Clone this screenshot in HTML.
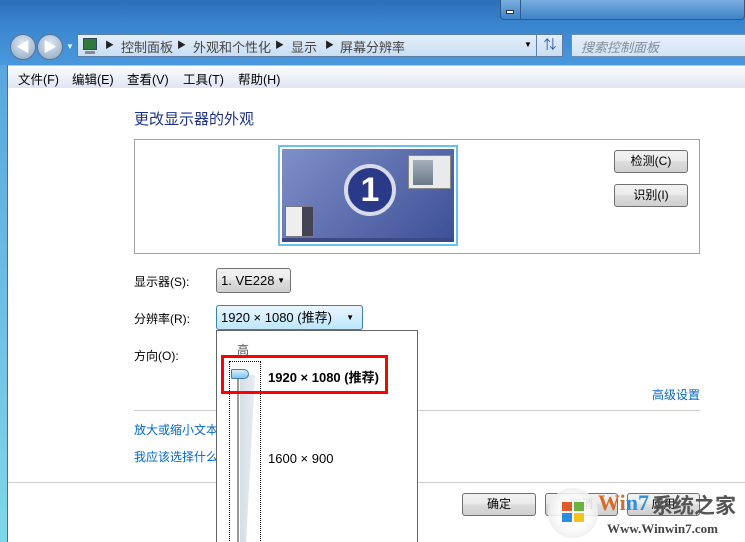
<!DOCTYPE html>
<html><head><meta charset="utf-8"><style>
*{margin:0;padding:0;box-sizing:border-box}
html,body{width:745px;height:542px;overflow:hidden}
body{position:relative;font-family:"Liberation Sans","Noto Sans CJK SC",sans-serif;font-size:12px;color:#000;background:#fff}
.a{position:absolute;white-space:nowrap}
.btn{position:absolute;border:1px solid #707070;border-radius:3px;background:linear-gradient(#f2f2f2 0%,#ebebeb 45%,#dddddd 50%,#cfcfcf 100%);text-align:center;line-height:21px;font-size:12px}
.lnk{color:#0066cc}
</style></head><body>
<div class="a" style="left:0;top:0;width:745px;height:65px;background:linear-gradient(180deg,#2d6fb8 0%,#3a86d0 40%,#4a98dc 100%)"></div>
<div class="a" style="left:0;top:65px;width:8px;height:477px;background:linear-gradient(180deg,#5aa6e0,#7fd8e8)"></div>
<div class="a" style="left:7px;top:65px;width:1px;height:477px;background:#4a6f8a"></div>
<!-- min btn -->
<div class="a" style="left:500px;top:0;width:245px;height:20px;border:1px solid #2c5a8c;border-top:none;border-radius:0 0 4px 4px;background:linear-gradient(#7aaede,#3e82c8)"></div>
<div class="a" style="left:520px;top:0;width:1px;height:20px;background:#2c5a8c"></div>
<div class="a" style="left:506px;top:10px;width:8px;height:4px;background:#fff;border:1px solid #333"></div>
<!-- nav buttons -->
<div class="a" style="left:10px;top:34px;width:26px;height:26px;border-radius:50%;background:radial-gradient(circle at 50% 35%,#dce8f4,#8ea6c0);border:1px solid #5a7390;color:#fff;text-align:center;line-height:24px;font-size:14px">◀</div>
<div class="a" style="left:37px;top:34px;width:26px;height:26px;border-radius:50%;background:radial-gradient(circle at 50% 35%,#dce8f4,#8ea6c0);border:1px solid #5a7390;color:#fff;text-align:center;line-height:24px;font-size:14px">▶</div>
<div class="a" style="left:66px;top:42px;font-size:8px;color:#cfe">▼</div>
<!-- address bar -->
<div class="a" style="left:77px;top:34px;width:486px;height:23px;border:1px solid #5e7fa8;background:linear-gradient(#e3eef9,#c9def3)"></div>
<div class="a" style="left:536px;top:34px;width:27px;height:23px;border-left:1px solid #5e7fa8;color:#235aa0;text-align:center;line-height:22px;font-size:13px">⇅</div>
<div class="a" style="left:83px;top:38px;width:14px;height:12px;background:#2f7a3a;border:1px solid #345"></div>
<div class="a" style="left:85px;top:51px;width:10px;height:3px;background:#889"></div>
<div class="a" style="left:105px;top:38px;font-size:9px;color:#222">▶</div>
<div class="a" style="left:121px;top:37px;font-size:13px;color:#444">控制面板</div>
<div class="a" style="left:177px;top:38px;font-size:9px;color:#222">▶</div>
<div class="a" style="left:193px;top:37px;font-size:13px;color:#444">外观和个性化</div>
<div class="a" style="left:275px;top:38px;font-size:9px;color:#222">▶</div>
<div class="a" style="left:291px;top:37px;font-size:13px;color:#444">显示</div>
<div class="a" style="left:325px;top:38px;font-size:9px;color:#222">▶</div>
<div class="a" style="left:340px;top:37px;font-size:13px;color:#444">屏幕分辨率</div>
<div class="a" style="left:524px;top:40px;font-size:8px;color:#000">▼</div>
<div class="a" style="left:571px;top:34px;width:180px;height:23px;border:1px solid #6c8fb8;background:linear-gradient(#e8f0f9,#d3e3f4)"></div>
<div class="a" style="left:581px;top:37px;color:#7f8c99;font-style:italic;font-size:13px">搜索控制面板</div>
<!-- menu -->
<div class="a" style="left:8px;top:65px;width:737px;height:23px;background:linear-gradient(#fbfcfe,#dfe6f2);border-top:1px solid #b8c8dc"></div>
<div class="a" style="left:18px;top:69px;font-size:12.5px">文件(F)</div>
<div class="a" style="left:72px;top:69px;font-size:12.5px">编辑(E)</div>
<div class="a" style="left:127px;top:69px;font-size:12.5px">查看(V)</div>
<div class="a" style="left:183px;top:69px;font-size:12.5px">工具(T)</div>
<div class="a" style="left:238px;top:69px;font-size:12.5px">帮助(H)</div>
<!-- content -->
<div class="a" style="left:134px;top:108px;font-size:15px;color:#1e3287">更改显示器的外观</div>
<div class="a" style="left:134px;top:139px;width:566px;height:115px;border:1px solid #a0a0a0"></div>
<div class="a" style="left:278px;top:145px;width:180px;height:101px;border:2px solid #6cc0ec;background:#fff;padding:2px">
 <div style="width:172px;height:93px;background:linear-gradient(135deg,#7f8fc8,#3d4f96);position:relative">
  <div class="a" style="left:62px;top:15px;width:52px;height:52px;border-radius:50%;background:#2a3a88;border:4px solid #d8dcea;color:#fff;font-weight:bold;font-size:34px;text-align:center;line-height:44px">1</div>
  <div class="a" style="left:126px;top:6px;width:43px;height:34px;background:#e9eaec;border:1px solid #888"><div style="margin:4px;width:20px;height:25px;background:linear-gradient(#a6b0bc,#6a7888)"></div></div>
  <div class="a" style="left:3px;top:57px;width:29px;height:31px;background:linear-gradient(90deg,#eee 60%,#445 60%);border:1px solid #778"></div>
  <div class="a" style="left:0;top:89px;width:172px;height:4px;background:#3b4a84"></div>
 </div>
</div>
<div class="btn" style="left:614px;top:150px;width:74px;height:23px">检测(C)</div>
<div class="btn" style="left:614px;top:184px;width:74px;height:23px">识别(I)</div>
<div class="a" style="left:134px;top:273px">显示器(S):</div>
<div class="btn" style="left:216px;top:268px;width:75px;height:25px;text-align:left;padding-left:4px;line-height:23px;font-size:13px">1. VE228 <span style="font-size:8px;position:absolute;right:5px">▼</span></div>
<div class="a" style="left:134px;top:310px">分辨率(R):</div>
<div class="a" style="left:216px;top:305px;width:147px;height:25px;border:1px solid #3c7fb1;border-radius:3px;background:linear-gradient(#eaf6fd,#bee6fd);padding-left:4px;line-height:23px;font-size:13px">1920 × 1080 (推荐)<span style="font-size:8px;position:absolute;right:8px">▼</span></div>
<div class="a" style="left:134px;top:347px">方向(O):</div>
<div class="a lnk" style="left:652px;top:386px">高级设置</div>
<div class="a" style="left:134px;top:410px;width:566px;height:1px;background:#ccc"></div>
<div class="a lnk" style="left:134px;top:421px">放大或缩小文本</div>
<div class="a lnk" style="left:134px;top:448px">我应该选择什么</div>
<div class="a" style="left:8px;top:482px;width:737px;height:1px;background:#ccc"></div>
<div class="btn" style="left:462px;top:493px;width:74px;height:23px">确定</div>
<div class="btn" style="left:545px;top:493px;width:73px;height:23px">取消</div>
<div class="btn" style="left:627px;top:493px;width:73px;height:23px">应用</div>
<!-- watermark -->
<div class="a" style="left:548px;top:488px;width:50px;height:50px;border-radius:50%;background:radial-gradient(circle,rgba(255,255,255,.9) 40%,rgba(220,220,220,.8));"></div>
<div class="a" style="left:562px;top:502px;width:10px;height:9px;background:#e25a2a"></div><div class="a" style="left:574px;top:502px;width:10px;height:9px;background:#6cb33e"></div>
<div class="a" style="left:562px;top:513px;width:10px;height:9px;background:#2b8ee0"></div><div class="a" style="left:574px;top:513px;width:10px;height:9px;background:#f5c419"></div>
<div class="a" style="left:598px;top:490px;font-family:'Liberation Serif',serif;font-weight:bold;font-size:22px;color:#d86a2a">Wi<span style="color:#2b8ee0">n7</span></div>
<div class="a" style="left:652px;top:490px;font-size:21px;font-weight:bold;color:#555">系统之家</div>
<div class="a" style="left:607px;top:521px;font-family:'Liberation Serif',serif;font-weight:bold;font-size:13px;color:#444">Www.Winwin7.com</div>
<!-- popup -->
<div class="a" style="left:216px;top:330px;width:202px;height:215px;border:1px solid #646464;background:#fff"></div>
<div class="a" style="left:237px;top:341px;color:#555">高</div>
<div class="a" style="left:229px;top:361px;width:32px;height:190px;border:1px dotted #000"></div>
<div class="a" style="left:237px;top:375px;width:2px;height:170px;background:#999"></div>
<div class="a" style="left:240px;top:375px;width:15px;height:170px;background:linear-gradient(90deg,#d5dde6,#e8edf2);clip-path:polygon(0 0,100% 0,40% 100%,0 100%)"></div>
<div class="a" style="left:231px;top:369px;width:18px;height:10px;border:1px solid #3a7bb0;border-radius:2px 6px 6px 2px;background:linear-gradient(#d8f0fc,#7ec6ec)"></div>
<div class="a" style="left:221px;top:355px;width:167px;height:39px;border:3px solid #f00"></div>
<div class="a" style="left:268px;top:367px;font-weight:bold;font-size:13px">1920 × 1080 (推荐)</div>
<div class="a" style="left:268px;top:451px;font-size:13px">1600 × 900</div>
</body></html>
